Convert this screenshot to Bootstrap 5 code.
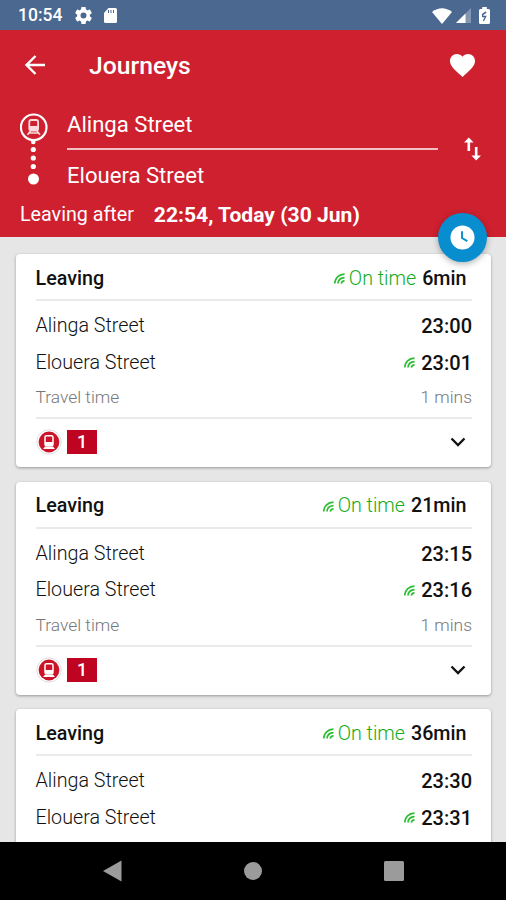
<!DOCTYPE html>
<html lang="en">
<head>
<meta charset="utf-8">
<meta name="viewport" content="width=device-width, initial-scale=1">
<title>Journeys</title>
<link href="https://cdn.jsdelivr.net/npm/bootstrap@5.3.0/dist/css/bootstrap.min.css" rel="stylesheet">
<style>
body{font-family:Roboto,"Liberation Sans",sans-serif;background:#e6e6e6;height:900px;color:#1b1b1b;line-height:1}
svg{display:block;flex:none}
.fw-med{font-weight:500}
.status-bar{height:30px;background:#4b6890;font-size:17.5px;padding:2px 16px 0 18px}
.gear{margin-left:13px}
.sd{margin-left:8px}
.status-bar svg{margin-top:-1px}
.trip-header{height:207px;background:#ce202f}
.title-bar{height:70px;padding:0 31px 0 24px}
.page-title{font-size:24.7px;margin:2px 0 0 43px}
.route{padding:0 25px 0 20px;height:94px}
.stop-fields{width:371px;margin-left:19px;font-size:22.1px}
.stop-field{height:49px}
.stop-field + .stop-field{border-top:2px solid #f3bfc3;margin-top:-1px;height:50px;padding-top:3px}
.when{font-size:19.7px;padding:1px 0 0 20px;height:40px}
.when b{font-size:21.1px;font-weight:700;margin-left:20px}
.fab{width:49px;height:49px;right:19px;bottom:-25px;background:#088ecf;z-index:2;box-shadow:0 2px 6px rgba(0,0,0,.3)}
.journeys{height:605px;padding:17px 15px 0 16px}
.journey{height:213px;margin-bottom:14.5px;border:0;border-radius:4px;padding:0 19px 0 19.5px;box-shadow:0 1px 3px rgba(0,0,0,.35);font-size:19.700px;font-weight:350;color:#111}
.journey-head{height:47px;border-bottom:2px solid #ebebeb;padding:4px 5.5px 0 0}
.journey-body{height:118px;padding-top:7px;border-bottom:2px solid #ebebeb}
.stop-row{height:36.5px}
.time{font-size:20px}
.row-live{margin-right:6px}
.travel{height:34px;font-size:17.4px;color:#777}
.on-time{color:#14ac19;margin:0 6px 0 4px}
.journey-foot{height:46px;padding-right:6.500px}
.route-no{width:30px;height:24px;background:#be0421;color:#fff;font-size:18px;margin-left:5.500px}
.nav-keys{height:58px;background:#000;padding:0 102px}
</style>
</head>
<body class="overflow-hidden">
<svg width="0" height="0" class="position-absolute" aria-hidden="true">
  <symbol id="live" viewBox="0 0 12 12"><path d="M.8 11.500C1 5.500 5.200 1.300 11.500 1.200M4.400 11.500C4.600 7.800 7.300 5.200 11.500 5M8 11.500C8.200 9.800 9.500 8.800 11.500 8.600" fill="none" stroke="#2dbd32" stroke-width="1.800"/></symbol>
  <symbol id="tram" viewBox="0 0 26 26">
    <circle cx="13" cy="13" r="12.200" fill="#fff" stroke="#ddd"/><circle cx="13" cy="13" r="10.400" fill="#cb1429"/>
    <rect x="9" y="6.800" width="8" height="10" rx="1.500" fill="none" stroke="#fff" stroke-width="1.500"/><path d="M9 13h8v3.500H9zM9 17.500l-2 2.500h12l-2-2.500z" fill="#fff"/>
  </symbol>
  <symbol id="chevron" viewBox="0 0 16 10"><path d="M1.500 1.500 8 8l6.500-6.500" fill="none" stroke="#111" stroke-width="2.300"/></symbol>
</svg>

<div class="status-bar d-flex align-items-center text-white">
  <span class="fw-med">10:54</span>
  <svg class="gear" width="17" height="17" viewBox="2 2 20 20" fill="#fff"><path d="M19.430 12.980c.04-.32.07-.64.07-.98s-.03-.66-.07-.98l2.110-1.650c.19-.15.24-.42.12-.64l-2-3.460c-.12-.22-.39-.3-.61-.22l-2.490 1c-.52-.4-1.080-.73-1.690-.98l-.38-2.650C14.460 2.180 14.250 2 14 2h-4c-.25 0-.46.18-.49.42l-.38 2.650c-.61.25-1.170.59-1.690.98l-2.490-1c-.23-.09-.49 0-.61.22l-2 3.460c-.13.22-.07.49.12.64l2.110 1.650c-.04.32-.07.65-.07.98s.03.66.07.98l-2.110 1.650c-.19.15-.24.42-.12.64l2 3.460c.12.22.39.3.61.22l2.490-1c.52.4 1.080.73 1.690.98l.38 2.650c.03.24.24.42.49.42h4c.25 0 .46-.18.49-.42l.38-2.650c.61-.25 1.170-.59 1.690-.98l2.490 1c.23.09.49 0 .61-.22l2-3.460c.12-.22.07-.49-.12-.64zM12 15.500a3.500 3.500 0 1 1 0-7 3.500 3.500 0 0 1 0 7z"/></svg>
  <svg class="sd" width="21" height="17" viewBox="0 0 21 17"><path d="M8.500 1h7Q17 1 17 2.500v12q0 1.500-1.500 1.500h-10Q4 16 4 14.500V6z" fill="#fff"/><path d="M8.500 3v3M11 3v3M13.500 3v3" stroke="#4b6890"/></svg>
  <svg class="ms-auto" width="20" height="16" viewBox="0 0 20 16"><path d="M0 4Q10-3.500 20 4L10 16z" fill="#fff"/></svg>
  <svg class="ms-1" width="15" height="15" viewBox="0 0 15 15"><path d="M0 15 15 0v15z" fill="#8397b2"/><path d="M0 15 9.500 5.500V15z" fill="#fff"/></svg>
  <svg class="ms-2" width="11" height="17" viewBox="0 0 12 17" preserveAspectRatio="none"><path d="M3.500 0h5v2h2Q12 2 12 3.500v12q0 1.500-1.500 1.500h-9Q0 17 0 15.500v-12Q0 2 1.500 2h2z" fill="#fff"/><path d="M7.800 5 4 7.500v2h3.200L4.800 14" fill="none" stroke="#4b6890" stroke-width="1.500"/></svg>
</div>

<header class="trip-header position-relative text-white">
  <div class="title-bar d-flex align-items-center">
    <svg width="22" height="20" viewBox="0 0 22 20"><path d="M21 10H3M11.500 1 2.500 10l9 9" fill="none" stroke="#fff" stroke-width="2.400"/></svg>
    <h1 class="page-title fw-med"><span>Journeys</span></h1>
    <svg class="ms-auto" width="25" height="23" viewBox="2 3 20 18.350" fill="#fff"><path d="m12 21.350-1.450-1.320C5.400 15.360 2 12.280 2 8.500 2 5.420 4.420 3 7.500 3c1.740 0 3.410.81 4.500 2.090C13.090 3.810 14.760 3 16.500 3 19.580 3 22 5.420 22 8.500c0 3.780-3.400 6.860-8.550 11.540z"/></svg>
  </div>
  <div class="route d-flex">
    <svg width="28" height="94" viewBox="0 0 28 94" fill="#fff">
      <circle cx="13.700" cy="27.300" r="12.800" fill="none" stroke="#fff" stroke-width="2.200"/>
      <rect x="9.300" y="20" width="8.800" height="10.500" rx="2" fill="none" stroke="#fbdcde" stroke-width="1.800"/><path d="M9.500 26h8.500v4H9.500z" fill="#fbdcde"/><path d="M10.500 31 7.500 34.800M17 31l3 3.800M9.500 33h8.500" fill="none" stroke="#fbdcde" stroke-width="1.600"/>
      <circle cx="13.300" cy="42" r="2.300"/><circle cx="13.300" cy="49.500" r="2.600"/><circle cx="13.300" cy="58" r="2.600"/><circle cx="13.300" cy="66.500" r="2.600"/><circle cx="13.500" cy="79" r="5.500"/>
    </svg>
    <div class="stop-fields">
      <div class="stop-field d-flex align-items-center"><span>Alinga Street</span></div>
      <div class="stop-field d-flex align-items-center"><span>Elouera Street</span></div>
    </div>
    <svg class="ms-auto" width="17" height="94" viewBox="0 0 17 94"><path d="M4.800 51V41M12.200 47v10" stroke="#fff" stroke-width="2.600"/><path d="M0 42.500 4.800 37.500l4.800 5zM7.400 55.500l4.800 5 4.800-5z" fill="#fff"/></svg>
  </div>
  <div class="when d-flex align-items-center"><span>Leaving after</span><b>22:54, Today (30 Jun)</b></div>
  <button class="fab btn border-0 rounded-circle p-0 position-absolute d-flex align-items-center justify-content-center" aria-label="Change time">
    <svg width="25" height="25" viewBox="0 0 26 26"><circle cx="13" cy="13" r="12.500" fill="#fff"/><path d="M12.500 6.500v7l5.500 3.300" fill="none" stroke="#088ecf" stroke-width="2"/></svg>
  </button>
</header>

<main class="journeys overflow-hidden">
  <article class="journey card">
    <div class="journey-head d-flex align-items-center"><span class="fw-med me-auto">Leaving</span><svg width="11" height="11"><use href="#live"/></svg><span class="on-time">On time</span><span class="fw-med">6min</span></div>
    <div class="journey-body">
      <div class="stop-row d-flex align-items-center"><span class="me-auto">Alinga Street</span><span class="time fw-med">23:00</span></div>
      <div class="stop-row d-flex align-items-center"><span class="me-auto">Elouera Street</span><svg class="row-live" width="11" height="11"><use href="#live"/></svg><span class="time fw-med">23:01</span></div>
      <div class="travel d-flex align-items-center justify-content-between"><span>Travel time</span><span>1 mins</span></div>
    </div>
    <div class="journey-foot d-flex align-items-center"><svg width="26" height="26"><use href="#tram"/></svg><span class="route-no fw-med d-flex align-items-center justify-content-center">1</span><svg class="ms-auto" width="16" height="10"><use href="#chevron"/></svg></div>
  </article>
  <article class="journey card">
    <div class="journey-head d-flex align-items-center"><span class="fw-med me-auto">Leaving</span><svg width="11" height="11"><use href="#live"/></svg><span class="on-time">On time</span><span class="fw-med">21min</span></div>
    <div class="journey-body">
      <div class="stop-row d-flex align-items-center"><span class="me-auto">Alinga Street</span><span class="time fw-med">23:15</span></div>
      <div class="stop-row d-flex align-items-center"><span class="me-auto">Elouera Street</span><svg class="row-live" width="11" height="11"><use href="#live"/></svg><span class="time fw-med">23:16</span></div>
      <div class="travel d-flex align-items-center justify-content-between"><span>Travel time</span><span>1 mins</span></div>
    </div>
    <div class="journey-foot d-flex align-items-center"><svg width="26" height="26"><use href="#tram"/></svg><span class="route-no fw-med d-flex align-items-center justify-content-center">1</span><svg class="ms-auto" width="16" height="10"><use href="#chevron"/></svg></div>
  </article>
  <article class="journey card">
    <div class="journey-head d-flex align-items-center"><span class="fw-med me-auto">Leaving</span><svg width="11" height="11"><use href="#live"/></svg><span class="on-time">On time</span><span class="fw-med">36min</span></div>
    <div class="journey-body">
      <div class="stop-row d-flex align-items-center"><span class="me-auto">Alinga Street</span><span class="time fw-med">23:30</span></div>
      <div class="stop-row d-flex align-items-center"><span class="me-auto">Elouera Street</span><svg class="row-live" width="11" height="11"><use href="#live"/></svg><span class="time fw-med">23:31</span></div>
    </div>
  </article>
</main>

<nav class="nav-keys d-flex align-items-center justify-content-between">
  <svg width="20" height="22" viewBox="0 0 20 22"><path d="M1 11 19.500.5v21z" fill="#9b9b9b"/></svg>
  <svg width="18" height="18" viewBox="0 0 18 18"><circle cx="9" cy="9" r="9" fill="#9b9b9b"/></svg>
  <svg width="20" height="20" viewBox="0 0 20 20"><rect width="20" height="20" rx="1.500" fill="#9b9b9b"/></svg>
</nav>
<script src="https://cdn.jsdelivr.net/npm/bootstrap@5.3.0/dist/js/bootstrap.bundle.min.js"></script>
</body>
</html>
